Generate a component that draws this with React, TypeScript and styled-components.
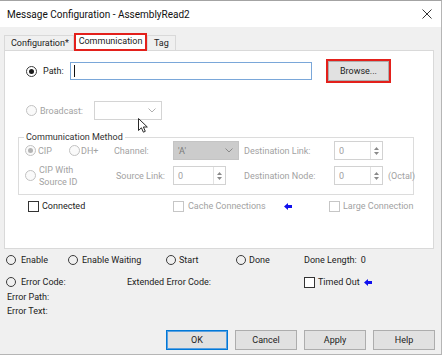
import React from 'react';
import styled, { createGlobalStyle } from 'styled-components';

const Global = createGlobalStyle`
  html, body { margin: 0; padding: 0; background: #ffffff; }
  * { box-sizing: border-box; }
  body {
    font-family: "Segoe UI", Roboto, "Noto Sans", sans-serif;
    font-size: 9px;
    color: #222;
  }
`;

const Window = styled.div`
  position: relative;
  width: 442px;
  height: 355px;
  display: flex;
  flex-direction: column;
  background: #f0f0f0;
  border-top: 1px solid #a3a3a3;
  border-right: 1px solid #b5b5b5;
  border-bottom: 1px solid #b5b5b5;
  overflow: hidden;
`;

const TitleBar = styled.div`
  height: 26px;
  flex: none;
  background: #ffffff;
  display: flex;
  align-items: center;
  justify-content: space-between;
  padding: 0 9px 0 7px;
  font-size: 10px;
  color: #111;
`;

const TabStrip = styled.div`
  margin: 6px 0 0 4px;
  height: 17px;
  display: flex;
  align-items: flex-end;
`;

const Tab = styled.div<{ $w: number; $active?: boolean }>`
  position: relative;
  z-index: ${(p) => (p.$active ? 2 : 1)};
  width: ${(p) => p.$w}px;
  height: ${(p) => (p.$active ? 18 : 15)}px;
  margin-bottom: ${(p) => (p.$active ? -1 : 0)}px;
  display: flex;
  align-items: center;
  justify-content: ${(p) => (p.$active ? 'center' : 'flex-start')};
  padding-left: ${(p) => (p.$active ? 0 : 6)}px;
  padding-bottom: ${(p) => (p.$active ? 3 : 0)}px;
  background: ${(p) => (p.$active ? '#ffffff' : '#f0f0f0')};
  border: ${(p) => (p.$active ? '2px solid #e3201b' : '1px solid #d9d9d9')};
  border-bottom: ${(p) => (p.$active ? '2px solid #e3201b' : 'none')};
  white-space: nowrap;
`;

const Panel = styled.div`
  position: relative;
  margin-left: 4px;
  width: 430px;
  height: 199px;
  flex: none;
  background: #ffffff;
  border: 1px solid #d9d9d9;
  display: flex;
  flex-direction: column;
`;

const Row = styled.div<{ $top: number; $h: number; $left: number }>`
  display: flex;
  align-items: center;
  margin-top: ${(p) => p.$top}px;
  height: ${(p) => p.$h}px;
  padding-left: ${(p) => p.$left}px;
  flex: none;
`;

const Label = styled.span<{ $w?: number; $ml?: number; $dis?: boolean }>`
  display: inline-block;
  flex: none;
  ${(p) => (p.$w ? `width: ${p.$w}px;` : '')}
  margin-left: ${(p) => p.$ml ?? 0}px;
  color: ${(p) => (p.$dis ? '#a2a2a2' : '#222')};
  white-space: nowrap;
  line-height: 12px;
`;

const Radio = styled.span<{ $size?: number; $checked?: boolean; $dis?: boolean }>`
  flex: none;
  display: inline-flex;
  align-items: center;
  justify-content: center;
  width: ${(p) => p.$size ?? 11}px;
  height: ${(p) => p.$size ?? 11}px;
  border-radius: 50%;
  border: 1px solid ${(p) => (p.$dis ? '#c2c2c2' : '#3c3c3c')};
  background: ${(p) => (p.$dis ? '#fafafa' : 'transparent')};
  &::after {
    content: '';
    display: ${(p) => (p.$checked ? 'block' : 'none')};
    width: 5px;
    height: 5px;
    border-radius: 50%;
    background: ${(p) => (p.$dis ? '#b4b4b4' : '#1a1a1a')};
  }
`;

const Check = styled.span<{ $dis?: boolean }>`
  flex: none;
  display: inline-block;
  width: 11px;
  height: 11px;
  border: 1px solid ${(p) => (p.$dis ? '#c6c6c6' : '#333')};
  background: #ffffff;
`;

const PathInput = styled.div`
  width: 242px;
  height: 18px;
  border: 1px solid #7aa7d9;
  background: #fff;
  display: flex;
  align-items: center;
  padding-left: 3px;
`;

const Caret = styled.span`
  width: 1px;
  height: 12px;
  background: #111;
`;

const Button = styled.div<{ $w: number; $ml?: number; $focus?: boolean; $marked?: boolean }>`
  flex: none;
  width: ${(p) => p.$w}px;
  height: 20px;
  margin-left: ${(p) => p.$ml ?? 0}px;
  display: flex;
  align-items: center;
  justify-content: center;
  background: #e1e1e1;
  border: 1px solid ${(p) => (p.$focus ? '#0078d7' : '#adadad')};
  ${(p) => (p.$focus ? 'box-shadow: inset 0 0 0 1px #5aa0e0;' : '')}
  ${(p) => (p.$marked ? 'outline: 2px solid #e3201b;' : '')}
  color: #222;
`;

const Combo = styled.div<{ $w: number; $fill?: boolean }>`
  flex: none;
  width: ${(p) => p.$w}px;
  height: 19px;
  display: flex;
  align-items: center;
  justify-content: space-between;
  padding: 0 5px 0 4px;
  background: ${(p) => (p.$fill ? '#cccccc' : '#ffffff')};
  border: 1px solid ${(p) => (p.$fill ? '#c4c4c4' : '#d4d4d4')};
  color: #7a7a7a;
`;

const Spin = styled.div<{ $w: number }>`
  flex: none;
  width: ${(p) => p.$w}px;
  height: 19px;
  display: flex;
  align-items: stretch;
  background: #fff;
  border: 1px solid #d2d2d2;
  color: #a0a0a0;
`;

const SpinValue = styled.span`
  flex: 1;
  display: flex;
  align-items: center;
  padding-left: 4px;
`;

const SpinButtons = styled.span`
  width: 12px;
  border-left: 1px solid #e2e2e2;
  display: flex;
  flex-direction: column;
  align-items: center;
  justify-content: center;
  gap: 2px;
`;

const GroupBox = styled.div`
  position: relative;
  flex: none;
  margin: 17px 0 0 13px;
  width: 396px;
  height: 58px;
  border: 1px solid #dcdcdc;
  padding: 3px 0 0 6px;
`;

const GroupTitle = styled.span`
  position: absolute;
  top: -7px;
  left: 5px;
  padding: 0 2px;
  background: #fff;
  line-height: 12px;
  color: #333;
`;

const MethodGrid = styled.div`
  display: grid;
  grid-template-columns: 89px 59px 71px 90px 49px auto;
  grid-template-rows: 19px 19px;
  row-gap: 6px;
  align-items: center;
`;

const Cell = styled.div<{ $w?: number; $ml?: number }>`
  display: flex;
  align-items: center;
  flex: none;
  ${(p) => (p.$w ? `width: ${p.$w}px;` : '')}
  margin-left: ${(p) => p.$ml ?? 0}px;
`;

const TwoLine = styled.span`
  margin-left: 3px;
  color: #a2a2a2;
  line-height: 12px;
  white-space: nowrap;
`;

const StatusRow = styled.div<{ $top: number; $left?: number }>`
  display: flex;
  align-items: center;
  flex: none;
  height: 12px;
  margin-top: ${(p) => p.$top}px;
  padding-left: ${(p) => p.$left ?? 6}px;
`;

const ButtonBar = styled.div`
  display: flex;
  justify-content: flex-end;
  gap: 7px;
  margin-top: 13px;
  padding-right: 6px;
  flex: none;
`;

const CursorLayer = styled.svg`
  position: absolute;
  left: 133px;
  top: 67px;
`;

const Chevron = ({ color = '#9a9a9a' }: { color?: string }) => (
  <svg width="8" height="5" viewBox="0 0 8 5">
    <path d="M0.5 0.5 L4 4 L7.5 0.5" fill="none" stroke={color} strokeWidth="1" />
  </svg>
);

const SpinArrows = () => (
  <>
    <svg width="5" height="3" viewBox="0 0 5 3">
      <path d="M0 3 L2.5 0 L5 3 Z" fill="#8a8a8a" />
    </svg>
    <svg width="5" height="3" viewBox="0 0 5 3">
      <path d="M0 0 L2.5 3 L5 0 Z" fill="#8a8a8a" />
    </svg>
  </>
);

const BlueArrow = () => (
  <svg width="8" height="7" viewBox="0 0 8 7">
    <polygon points="0,3.5 4,0 4,2 8,2 8,5 4,5 4,7" fill="#1010ee" />
  </svg>
);

const CloseIcon = () => (
  <svg width="10" height="10" viewBox="0 0 10 10">
    <path d="M0.5 0.5 L9.5 9.5 M9.5 0.5 L0.5 9.5" stroke="#333" strokeWidth="1" />
  </svg>
);

const SpinBox = ({ w }: { w: number }) => (
  <Spin $w={w}>
    <SpinValue>0</SpinValue>
    <SpinButtons>
      <SpinArrows />
    </SpinButtons>
  </Spin>
);

export default function App() {
  return (
    <>
      <Global />
      <Window>
        <TitleBar>
          <span>Message Configuration - AssemblyRead2</span>
          <CloseIcon />
        </TitleBar>

        <TabStrip>
          <Tab $w={70}>Configuration*</Tab>
          <Tab $w={73} $active>
            Communication
          </Tab>
          <Tab $w={29}>Tag</Tab>
        </TabStrip>

        <Panel>
          <Row $top={10} $h={20} $left={21}>
            <Radio $checked />
            <Label $ml={6} $w={27}>
              Path:
            </Label>
            <PathInput>
              <Caret />
            </PathInput>
            <Button $w={61} $ml={16} $marked>
              Browse...
            </Button>
          </Row>

          <Row $top={20} $h={19} $left={21}>
            <Radio $dis />
            <Label $ml={3} $w={54} $dis>
              Broadcast:
            </Label>
            <Combo $w={68}>
              <span />
              <Chevron color="#b0b0b0" />
            </Combo>
          </Row>

          <GroupBox>
            <GroupTitle>Communication Method</GroupTitle>
            <MethodGrid>
              <Cell>
                <Radio $dis $checked />
                <Label $ml={2} $w={31} $dis>
                  CIP
                </Label>
                <Radio $dis />
                <Label $ml={1} $dis>
                  DH+
                </Label>
              </Cell>
              <Label $dis>Channel:</Label>
              <Combo $w={66} $fill>
                <span>'A'</span>
                <Chevron color="#8a8a8a" />
              </Combo>
              <Label $dis>Destination Link:</Label>
              <SpinBox w={49} />
              <span />

              <Cell>
                <Radio $dis />
                <TwoLine>
                  CIP With
                  <br />
                  Source ID
                </TwoLine>
              </Cell>
              <Label $ml={2} $dis>
                Source Link:
              </Label>
              <SpinBox w={53} />
              <Label $dis>Destination Node:</Label>
              <SpinBox w={49} />
              <Label $ml={5} $dis>
                (Octal)
              </Label>
            </MethodGrid>
          </GroupBox>

          <Row $top={5} $h={12} $left={23}>
            <Cell $w={145}>
              <Check />
              <Label $ml={3}>Connected</Label>
            </Cell>
            <Cell $w={111}>
              <Check $dis />
              <Label $ml={4} $dis>
                Cache Connections
              </Label>
            </Cell>
            <BlueArrow />
            <Cell $ml={37}>
              <Check $dis />
              <Label $ml={3} $dis>
                Large Connection
              </Label>
            </Cell>
          </Row>

          <CursorLayer width="11" height="15" viewBox="0 0 11 15">
            <path
              d="M0.5 0.5 L0.5 12.5 L3.4 9.8 L5.4 14.2 L7.3 13.3 L5.4 9 L9.3 9 Z"
              fill="#ffffff"
              stroke="#2a2a2a"
              strokeWidth="1"
              strokeLinejoin="round"
            />
          </CursorLayer>
        </Panel>

        <StatusRow $top={5}>
          <Cell $w={62}>
            <Radio $size={10} />
            <Label $ml={5}>Enable</Label>
          </Cell>
          <Cell $w={98}>
            <Radio $size={10} />
            <Label $ml={4}>Enable Waiting</Label>
          </Cell>
          <Cell $w={70}>
            <Radio $size={10} />
            <Label $ml={3}>Start</Label>
          </Cell>
          <Cell $w={68}>
            <Radio $size={10} />
            <Label $ml={3}>Done</Label>
          </Cell>
          <Label>Done Length:</Label>
          <Label $ml={4}>0</Label>
        </StatusRow>

        <StatusRow $top={10}>
          <Cell $w={121}>
            <Radio $size={10} />
            <Label $ml={5}>Error Code:</Label>
          </Cell>
          <Cell $w={177}>
            <Label>Extended Error Code:</Label>
          </Cell>
          <Check />
          <Label $ml={3}>Timed Out</Label>
          <Cell $ml={4}>
            <BlueArrow />
          </Cell>
        </StatusRow>

        <StatusRow $top={3} $left={7}>
          <Label>Error Path:</Label>
        </StatusRow>
        <StatusRow $top={2} $left={7}>
          <Label>Error Text:</Label>
        </StatusRow>

        <ButtonBar>
          <Button $w={62} $focus>
            OK
          </Button>
          <Button $w={62}>Cancel</Button>
          <Button $w={62}>Apply</Button>
          <Button $w={62}>Help</Button>
        </ButtonBar>
      </Window>
    </>
  );
}
